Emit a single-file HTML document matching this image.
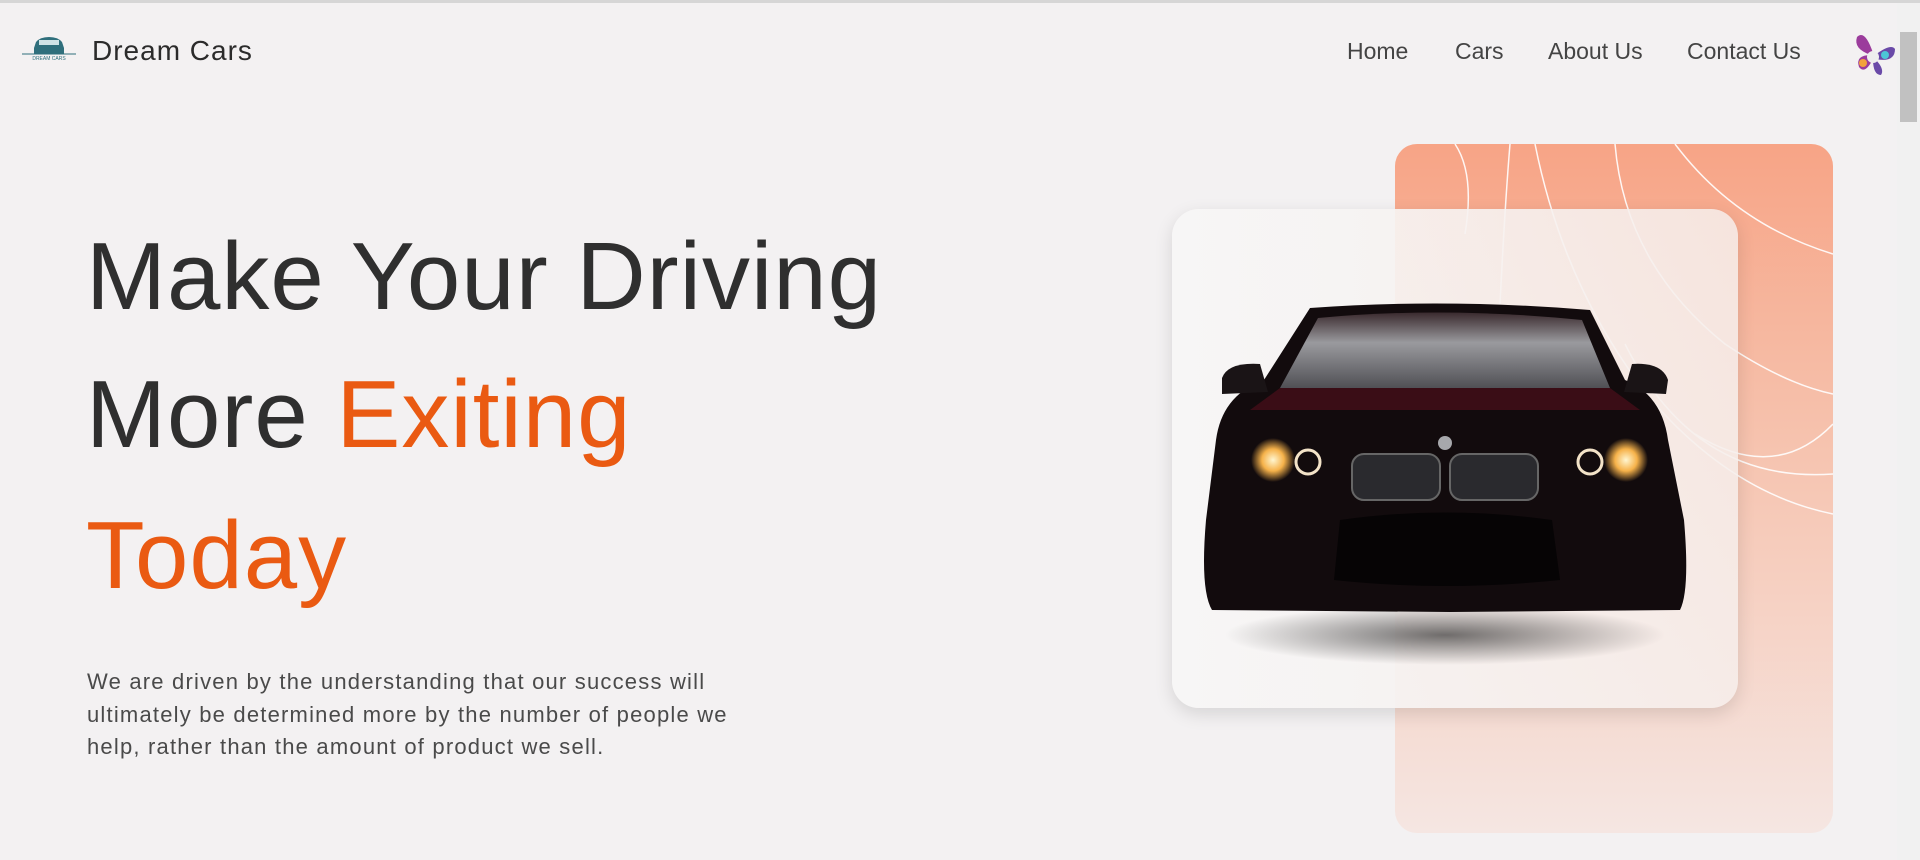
<!DOCTYPE html>
<html><head><meta charset="utf-8"><style>
*{margin:0;padding:0;box-sizing:border-box}
html,body{width:1920px;height:860px;overflow:hidden;background:#f3f1f2;font-family:"Liberation Sans",sans-serif}
.top{position:absolute;left:0;top:0;width:1920px;height:3px;background:#d6d6d6}
.sb{position:absolute;right:0;top:3px;width:23px;height:857px;background:#f1f1f1}
.thumb{position:absolute;right:3px;top:29px;width:17px;height:90px;background:#c1c1c1}
.logo{position:absolute;left:92px;top:35px;font-size:28px;color:#2b2b2b;letter-spacing:1px}
.nav a{position:absolute;top:38px;font-size:23px;color:#444;text-decoration:none}
h1{position:absolute;left:86px;font-weight:400;font-size:96px;color:#2f2f2f;letter-spacing:1px;white-space:nowrap}
.o{color:#ea5a12}
p{position:absolute;left:87px;top:666px;white-space:nowrap;font-size:22px;letter-spacing:1.2px;line-height:32.5px;color:#4a4a4a}
.orange{position:absolute;left:1395px;top:144px;width:438px;height:689px;border-radius:22px;background:linear-gradient(#f7a486,#f6c4b0 45%,#f5e6e2);overflow:hidden}
.card{position:absolute;left:1172px;top:209px;width:566px;height:499px;border-radius:27px;background:linear-gradient(90deg,rgba(247,246,246,.97),rgba(246,238,235,.85));box-shadow:0 6px 18px rgba(0,0,0,.12)}
</style></head><body>
<div class="top"></div>
<svg style="position:absolute;left:22px;top:36px" width="54" height="30" viewBox="0 0 54 30">
<path d="M14 6 Q18 1 27 1 Q36 1 40 6 L42 12 L42 18 L12 18 L12 12 Z" fill="#2f6f7c"/>
<rect x="17" y="4" width="20" height="5" fill="#cfe3e6"/>
<line x1="0" y1="18" x2="54" y2="18" stroke="#2f6f7c" stroke-width="1"/>
<text x="27" y="24" font-size="5" fill="#2f6f7c" text-anchor="middle" font-family="Liberation Sans">DREAM CARS</text>
</svg>
<div class="logo">Dream Cars</div>
<div class="nav"><a style="left:1347px">Home</a><a style="left:1455px">Cars</a><a style="left:1548px">About Us</a><a style="left:1687px">Contact Us</a></div>
<svg style="position:absolute;left:1851px;top:29px" width="46" height="50" viewBox="0 0 46 50">
<path d="M22 24 Q14 0 6 8 Q2 20 20 26 Q4 26 8 38 Q14 46 22 30 Z" fill="#9b3c9c"/>
<path d="M24 26 Q40 14 44 20 Q44 34 24 30 Q34 40 30 46 Q22 46 22 30 Z" fill="#6a4aa8"/>
<circle cx="22" cy="28" r="6" fill="#eee"/><circle cx="34" cy="26" r="4" fill="#4cc6d6"/><circle cx="12" cy="34" r="4" fill="#f2a23a"/>
</svg>
<div class="sb"><div class="thumb"></div></div>
<h1 style="top:222px">Make Your Driving</h1>
<h1 style="top:360px">More <span class="o">Exiting</span></h1>
<h1 style="top:501px" class="o">Today</h1>
<p>We are driven by the understanding that our success will<br>ultimately be determined more by the number of people we<br>help, rather than the amount of product we sell.</p>
<div class="orange"><svg width="438" height="689" fill="none" stroke="#fff" stroke-width="1.5" opacity=".9">
<path d="M60 0 Q80 30 70 90"/><path d="M115 0 Q110 60 105 160"/><path d="M140 0 Q170 150 260 260 Q340 350 438 370"/><path d="M220 0 Q230 120 330 200 Q390 240 438 250"/><path d="M280 0 Q340 80 438 110"/><path d="M230 200 Q300 340 438 330"/><path d="M300 290 Q380 340 438 280"/></svg></div>
<div class="card"></div>
<svg style="position:absolute;left:0;top:0" width="1920" height="860">
<defs><radialGradient id="sh" cx=".5" cy=".5" r=".5"><stop offset="0" stop-color="#000" stop-opacity=".55"/><stop offset="1" stop-color="#000" stop-opacity="0"/></radialGradient>
<radialGradient id="lt" cx=".5" cy=".5" r=".5"><stop offset="0" stop-color="#fff6d0"/><stop offset=".5" stop-color="#f6b24a"/><stop offset="1" stop-color="#f6b24a" stop-opacity="0"/></radialGradient>
<linearGradient id="ws" x1="0" y1="0" x2="0" y2="1"><stop offset="0" stop-color="#3a2a2e"/><stop offset=".4" stop-color="#9a9a9e"/><stop offset="1" stop-color="#505055"/></linearGradient></defs>
<ellipse cx="1445" cy="635" rx="220" ry="30" fill="url(#sh)"/>
<path d="M1310 308 Q1445 298 1590 310 L1625 380 Q1662 395 1668 440 L1684 520 Q1690 590 1680 610 L1450 612 L1212 610 Q1200 590 1206 520 L1216 440 Q1222 395 1264 380 Z" fill="#120b0d"/>
<path d="M1318 318 Q1445 306 1582 320 L1610 388 L1280 388 Z" fill="url(#ws)"/>
<path d="M1280 388 L1610 388 L1640 410 L1250 410 Z" fill="#3a0d16"/>
<path d="M1222 378 Q1228 362 1260 364 L1268 392 L1222 394 Z" fill="#1a1416"/>
<path d="M1632 364 Q1662 362 1668 380 L1666 394 L1624 392 Z" fill="#1a1416"/>
<circle cx="1273" cy="460" r="22" fill="url(#lt)"/><circle cx="1308" cy="462" r="12" fill="none" stroke="#f3e3c8" stroke-width="3"/>
<circle cx="1626" cy="460" r="22" fill="url(#lt)"/><circle cx="1590" cy="462" r="12" fill="none" stroke="#f3e3c8" stroke-width="3"/>
<circle cx="1445" cy="443" r="7" fill="#a7a8ac"/>
<rect x="1352" y="454" width="88" height="46" rx="12" fill="#2a2a2e" stroke="#666" stroke-width="2"/>
<rect x="1450" y="454" width="88" height="46" rx="12" fill="#2a2a2e" stroke="#666" stroke-width="2"/>
<path d="M1340 520 Q1445 505 1552 520 L1560 580 Q1445 592 1334 580 Z" fill="#060405"/>
</svg>
</body></html>
